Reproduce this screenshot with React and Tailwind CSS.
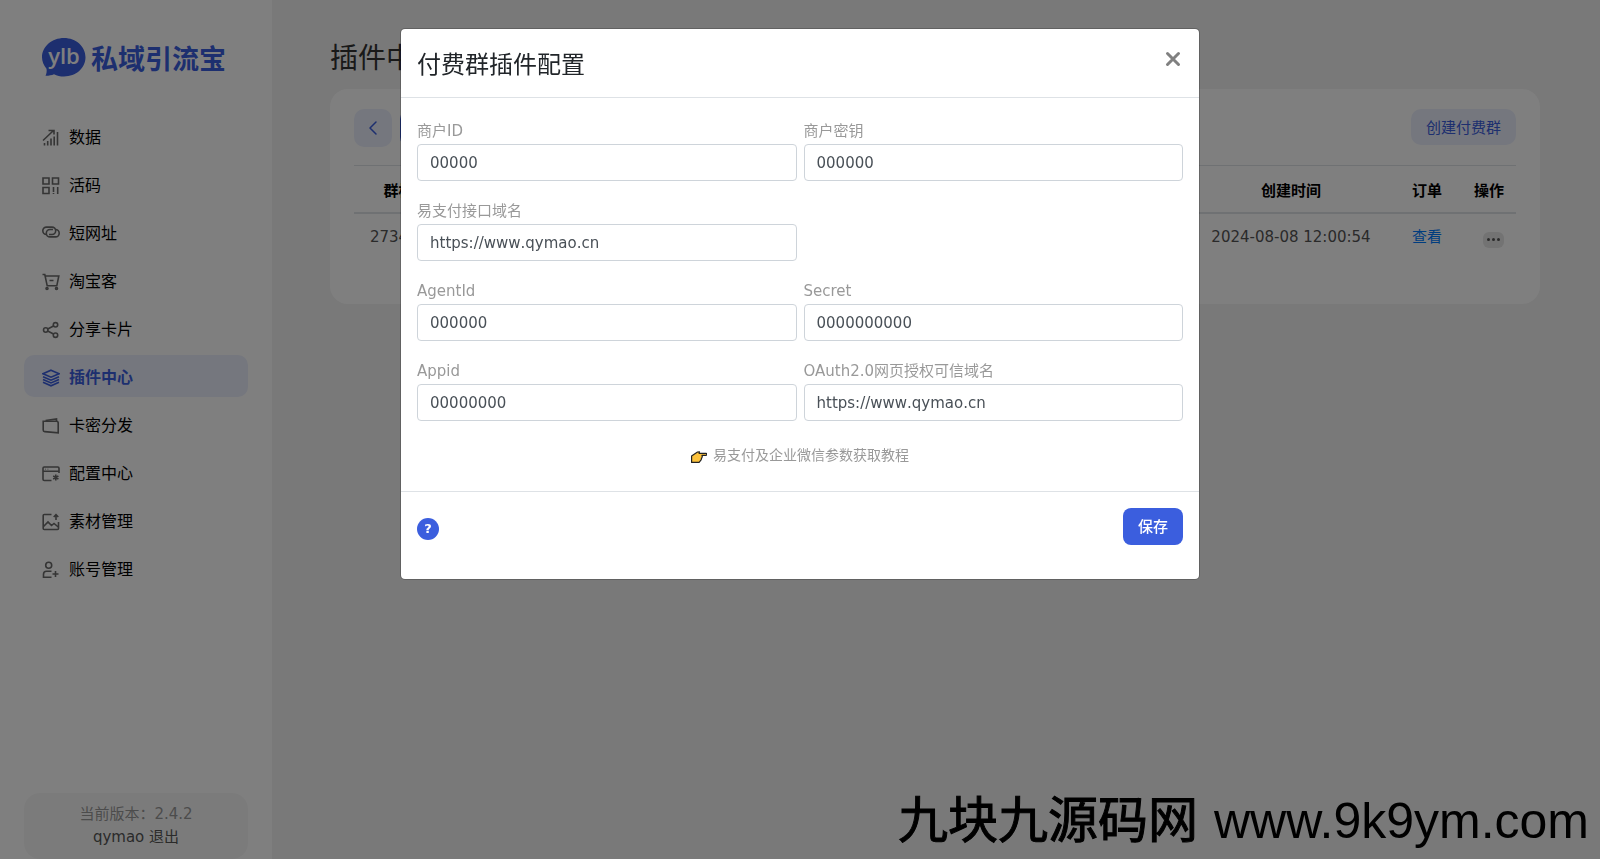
import { useState } from 'react'
import { ChevronLeft } from 'lucide-react'

const icons = {
  data: (
    <>
      <path d="M1 11.5 11.5 1.5M6.5 1.5h5.5v4" />
      <path d="M2.5 14v2.5M5.7 12v4.5M9 9.5v7M12.2 7.5v9M15.5 3v13.5" />
    </>
  ),
  code: (
    <>
      <path d="M1 1h6v6H1zM10.5 1h6v6h-6zM1 10.500h6v6H1z" />
      <path d="M11.500 10v5M15.700 10v7M11.500 16v1" />
    </>
  ),
  link: (
    <>
      <path d="M4.500 9.500a3.700 3.700 0 0 1 0-7.400H10a3.700 3.700 0 0 1 0 7.400H7" />
      <path d="M13.500 4.500a3.700 3.700 0 0 1 0 7.400H8a3.700 3.700 0 0 1 0-7.400h3" />
    </>
  ),
  cart: (
    <>
      <path d="M.5 1.500h2.300l2.400 11.300h9.600L16.800 3H3.200M7.500 7.500h4" />
      <circle cx="5" cy="15.500" r="1" />
      <circle cx="14.500" cy="15.500" r="1" />
    </>
  ),
  share: (
    <>
      <circle cx="3.700" cy="9" r="2.200" />
      <circle cx="13.500" cy="3.800" r="2.200" />
      <circle cx="13.500" cy="14.200" r="2.200" />
      <path d="m5.700 8 5.800-3M5.700 10l5.800 3" />
    </>
  ),
  layers: (
    <>
      <path d="M9 1.200 17 4.700 9 8.200 1 4.700z" />
      <path d="m1 7.700 8 3.500 8-3.500M1 10.500l8 3.500 8-3.500M1 13.300l8 3.500 8-3.500" />
    </>
  ),
  wallet: (
    <>
      <path d="M1.200 4.200h13.300q1.700 0 1.700 1.700v10L2.700 14.600q-1.500-.1-1.500-1.700z" />
      <path d="M3.500 3.500 14.500 2v2" />
    </>
  ),
  config: (
    <>
      <path d="M9.500 15.500H2.200Q1 15.500 1 14.300V3.200Q1 2 2.200 2h13.600Q17 2 17 3.200V8M1 6.200h16M3.500 4.200h.5M5.700 4.200h.5" />
      <path d="M13.800 9.500v6M11.200 11l5.200 3M16.400 11l-5.200 3" />
    </>
  ),
  picture: (
    <>
      <path d="M9.500 1.500H2.200Q1.200 1.500 1.200 2.500v13q0 1 1 1h13.300q1 0 1-1V9" />
      <path d="m1.500 13.500 4.500-4.500 3.500 3.500 2.500-2 4.300 3.500M14 7V2M11.700 4 14 1.700 16.300 4" />
    </>
  ),
  user: (
    <>
      <circle cx="6.700" cy="4.200" r="3" />
      <path d="M9.500 16.300h-8v-3q0-3 3-3h5M13.500 10v6M10.500 13h6" />
    </>
  ),
}

const menu = [
  { label: '数据', icon: 'data' },
  { label: '活码', icon: 'code' },
  { label: '短网址', icon: 'link' },
  { label: '淘宝客', icon: 'cart' },
  { label: '分享卡片', icon: 'share' },
  { label: '插件中心', icon: 'layers', active: true },
  { label: '卡密分发', icon: 'wallet' },
  { label: '配置中心', icon: 'config' },
  { label: '素材管理', icon: 'picture' },
  { label: '账号管理', icon: 'user' },
]

const fields = [
  { id: 'pid', label: '商户ID', value: '00000' },
  { id: 'key', label: '商户密钥', value: '000000' },
  { id: 'api', label: '易支付接口域名', value: 'https://www.qymao.cn', wide: true },
  { id: 'agentid', label: 'AgentId', value: '000000' },
  { id: 'secret', label: 'Secret', value: '0000000000' },
  { id: 'appid', label: 'Appid', value: '00000000' },
  { id: 'oauth', label: 'OAuth2.0网页授权可信域名', value: 'https://www.qymao.cn' },
]

function Logo() {
  return (
    <a href="#" className="flex items-center gap-1 pl-[17px] text-[#3b5ede]">
      <svg viewBox="0 0 46 40" className="h-10 w-[46px]">
        <path
          d="M23 0C35 0 44.500 8.500 44.500 19.300S35 38.500 23 38.500c-3.800 0-7-.8-10-2.300-2.500 1-5.500 1.600-8.500 1.500 1-2 1.500-4.500 1-7C2.700 27.500 1 23.500 1 19.300 1 8.500 11 0 23 0z"
          fill="currentColor"
        />
        <text x="23" y="26" textAnchor="middle" fontSize="22" fontWeight="600" fontFamily="Open Sans, sans-serif" fill="#fff">
          ylb
        </text>
      </svg>
      <span className="text-[27px] leading-10 font-bold font-['Noto_Sans_CJK_SC',sans-serif]">私域引流宝</span>
    </a>
  )
}

function Sidebar() {
  return (
    <aside className="flex min-h-screen w-[272px] shrink-0 flex-col bg-white px-6 pt-[38px]">
      <Logo />
      <nav className="mt-[37px] flex flex-col gap-1.5">
        {menu.map((item) => (
          <a
            key={item.label}
            href="#"
            className={
              item.active
                ? 'flex h-[42px] items-center gap-[9px] rounded-[10px] bg-[#ebeffc] pt-[3px] pl-[18px] text-base font-bold text-[#3b5ede]'
                : 'flex h-[42px] items-center gap-[9px] rounded-[10px] pt-[3px] pl-[18px] text-base text-black'
            }
          >
            <svg
              viewBox="0 0 18 18"
              className={item.active ? 'h-[18px] w-[18px]' : 'h-[18px] w-[18px] text-[#6a6a6a]'}
              fill="none"
              stroke="currentColor"
              strokeWidth="1.6"
            >
              {icons[item.icon]}
            </svg>
            {item.label}
          </a>
        ))}
      </nav>
      <div className="mt-auto rounded-2xl bg-[#f7f7f7] py-[10px] text-center leading-[23px]">
        <p className="text-[#999]">当前版本：2.4.2</p>
        <p className="text-[#555]">
          qymao <a href="#">退出</a>
        </p>
      </div>
    </aside>
  )
}

function GroupTable() {
  return (
    <table className="mt-[18px] w-full table-fixed border-t border-[#dee2e6] text-center">
      <colgroup>
        <col className="w-[104px]" />
        <col />
        <col className="w-[202px]" />
        <col className="w-[70px]" />
        <col className="w-[54px]" />
      </colgroup>
      <thead>
        <tr className="h-[47px] border-b-2 border-[#dee2e6] text-black">
          <th className="pt-1">群标题</th>
          <th></th>
          <th className="pt-1">创建时间</th>
          <th className="pt-1">订单</th>
          <th className="pt-1">操作</th>
        </tr>
      </thead>
      <tbody>
        <tr className="h-[49px] text-[#555]">
          <td>2734-081</td>
          <td></td>
          <td>2024-08-08 12:00:54</td>
          <td>
            <a href="#" className="text-[#007bff]">查看</a>
          </td>
          <td className="pt-1 pr-3 text-right">
            <button type="button" aria-label="更多" className="inline-flex h-4 w-[21px] items-center justify-center gap-0.5 rounded-md bg-[#e6e6e6] align-middle">
              <i className="h-[3px] w-[3px] rounded-full bg-[#555]" />
              <i className="h-[3px] w-[3px] rounded-full bg-[#555]" />
              <i className="h-[3px] w-[3px] rounded-full bg-[#555]" />
            </button>
          </td>
        </tr>
      </tbody>
    </table>
  )
}

function ConfigDialog() {
  const [values, setValues] = useState(Object.fromEntries(fields.map((f) => [f.id, f.value])))

  return (
    <div className="fixed inset-0 overflow-auto bg-black/50 px-4 pt-7">
      <div role="dialog" aria-labelledby="dialog-title" className="mx-auto max-w-[800px] rounded-[5px] border border-black/20 bg-white bg-clip-padding">
        <header className="flex items-start justify-between border-b border-[#dee2e6] px-4 pt-[18px] pb-[14px]">
          <h2 id="dialog-title" className="text-2xl leading-9 text-[#212529]">付费群插件配置</h2>
          <button type="button" aria-label="关闭" className="mt-1 mr-0.5 text-[#808080]">
            <svg viewBox="0 0 16 16" className="h-4 w-4" stroke="currentColor" strokeWidth="3" strokeLinecap="round">
              <path d="m2.500 2.500 11 11M13.500 2.500l-11 11" />
            </svg>
          </button>
        </header>
        <form className="px-4 pt-[21px] pb-[26px]">
          <div className="grid grid-cols-2 gap-x-[7px] gap-y-[18px]">
            {fields.map((f) => (
              <div key={f.id} className={f.wide ? 'col-span-2 grid grid-cols-2 gap-x-[7px]' : ''}>
                <div>
                  <label htmlFor={f.id} className="mb-px block leading-6 text-[#999]">{f.label}</label>
                  <input
                    id={f.id}
                    type="text"
                    value={values[f.id]}
                    onChange={(e) => setValues({ ...values, [f.id]: e.target.value })}
                    className="block h-[37px] w-full rounded-[4px] border border-[#ced4da] px-3 text-[#495057] outline-none [font-kerning:none]"
                  />
                </div>
              </div>
            ))}
          </div>
          <a href="#" className="mt-6 flex items-center justify-center gap-1.5 text-sm leading-5 text-[#999]">
            <svg viewBox="0 0 16 12" className="mt-1 h-3 w-4" fill="#fcc23c" stroke="#222" strokeWidth="1.2" strokeLinejoin="round">
              <path d="M.6 5 6.500 1 8.500.8 8 2.300h7q.8 0 .8 1t-.8 1h-4l.3 1.500-.7 1.500-.5 1.500-1 1.400-1 1.200H.6z" />
            </svg>
            易支付及企业微信参数获取教程
          </a>
        </form>
        <footer className="flex items-start justify-between border-t border-[#dee2e6] px-4 pt-4 pb-[34px]">
          <button type="button" aria-label="帮助" className="mt-[10px] h-[22px] w-[22px] rounded-full bg-[#3b5ede] text-[13px] leading-[22px] font-bold text-white">
            ?
          </button>
          <button type="submit" className="h-[37px] rounded-lg bg-[#3b5ede] px-[15px] pt-0.5 font-medium text-white">保存</button>
        </footer>
      </div>
    </div>
  )
}

export default function App() {
  return (
    <div className="flex min-h-screen bg-[#f2f2f2] font-['DejaVu_Sans','Noto_Sans_CJK_SC',sans-serif] text-[15px]">
      <Sidebar />
      <main className="min-w-0 flex-1 pt-[38px] pr-[60px] pl-[58px]">
        <h1 className="text-[28px] leading-[42px] text-[#333]">插件中心</h1>
        <section className="mt-[9px] rounded-[18px] bg-white px-6 pt-5 pb-[42px]">
          <div className="flex items-start gap-2">
            <button type="button" aria-label="返回" className="flex h-[38px] w-[38px] items-center justify-center rounded-[10px] bg-[#ebeffc] text-[#3b5ede]">
              <ChevronLeft className="h-6 w-6" strokeWidth={1.5} />
            </button>
            <button type="button" aria-label="配置" className="h-[38px] w-[60px] rounded-[10px] bg-[#3b5ede]" />
            <button type="button" className="ml-auto h-9 rounded-[10px] bg-[#ebeffc] px-[15px] pt-0.5 text-[#3b5ede]">创建付费群</button>
          </div>
          <GroupTable />
        </section>
      </main>
      <ConfigDialog />
      <div className="pointer-events-none fixed right-[11px] bottom-0 flex items-baseline gap-4 text-black">
        <span className="text-[50px] leading-[76px] font-['Noto_Sans_CJK_SC',sans-serif] [-webkit-text-stroke:1px_black]">九块九源码网</span>
        <span className="text-[50px] leading-[76px] font-['Liberation_Sans',sans-serif]">www.9k9ym.com</span>
      </div>
    </div>
  )
}
